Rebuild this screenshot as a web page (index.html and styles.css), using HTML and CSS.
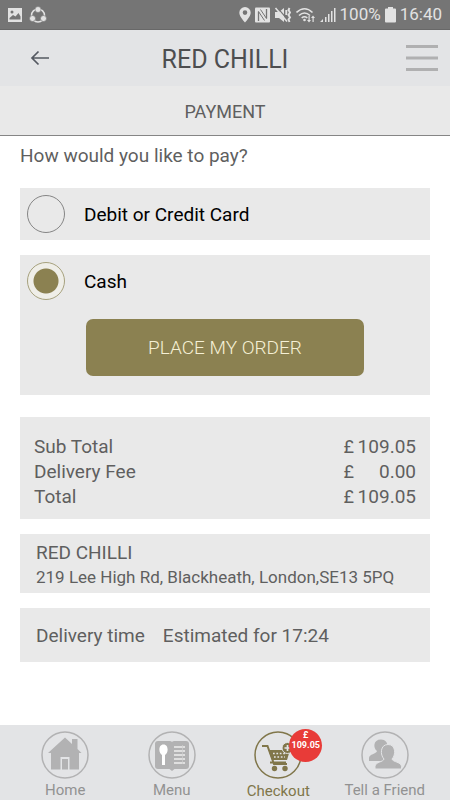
FILE: index.html
```html
<!DOCTYPE html>
<html lang="en">
<head>
<meta charset="utf-8">
<meta name="viewport" content="width=device-width, initial-scale=1">
<title>Red Chilli - Payment</title>
<link rel="stylesheet" href="styles.css">
</head>
<body>
<div class="status">
  <div class="status-group status-left">
    <svg width="16" height="16" viewBox="0 0 16 16"><path fill="currentColor" fill-rule="evenodd" d="M1 1h14v14H1zM2.500 12.500h11V9.500L11.500 6 8.500 9.500 6 8l-3.500 3z"/><circle cx="5" cy="5" r="1.500" fill="#757575"/></svg>
    <svg width="18" height="18" viewBox="0 0 18 18"><circle cx="9" cy="9.500" r="6.500" fill="none" stroke="currentColor" stroke-width="1.500"/><g fill="currentColor" stroke="#757575" stroke-width=".6"><circle cx="9" cy="3.500" r="3"/><circle cx="3.500" cy="12.500" r="3"/><circle cx="14.500" cy="12.500" r="3"/></g></svg>
  </div>
  <div class="status-group status-right">
    <svg width="12" height="16" viewBox="0 0 12 16"><path fill="currentColor" fill-rule="evenodd" d="M6 0a5.700 5.700 0 0 1 5.700 5.700C11.700 9.500 6 15.500 6 15.500S.3 9.500.3 5.700A5.700 5.700 0 0 1 6 0zm0 3.300a2.300 2.300 0 1 0 0 4.600 2.300 2.300 0 0 0 0-4.600z"/></svg>
    <svg width="15" height="16" viewBox="0 0 15 16"><rect y=".5" width="15" height="15" rx="1" fill="currentColor"/><path d="M3.500 14V4.500M11.500 2v9.500" fill="none" stroke="#757575" stroke-width="1.300"/><path d="M5.500 2.500l6 9M3.500 4.500l6 9" stroke="#757575"/></svg>
    <svg width="18" height="16" viewBox="0 0 18 16"><path fill="currentColor" d="M1 5h4l5-4v14l-5-4H1z"/><path d="M3.500.8L13.500 12.500" stroke="#757575" stroke-width="1.200"/><path d="M1.500 1L13 14.500" stroke="currentColor" stroke-width="1.600"/><path d="M12.300 3v5M15.500 1l-1 2 1.500 2.500L14.500 8l1.500 2.500-1.500 2 1 2.500" fill="none" stroke="currentColor" stroke-width="1.900"/></svg>
    <svg width="20" height="16" viewBox="0 0 20 16"><g fill="none" stroke="currentColor" stroke-width="1.600"><path d="M.5 5.500Q8.500-2 16.500 5.500M3 8.500q5.500-5 11 0M5.700 11q2.800-2.500 5.600 0"/></g><circle cx="8.500" cy="13" r="1.300" fill="currentColor"/><path fill="currentColor" d="M12.500 9h1.200v4H15l-2 2.500-2-2.500h1.500zM16.500 15h1.200v-4H19l-2-2.500-2 2.500h1.500z"/></svg>
    <svg width="16" height="16" viewBox="0 0 16 16"><path fill="currentColor" d="M0 15l3-3v3zM5 10h1.500v5H5zM8 7h1.500v8H8zM11 4h1.500v11H11zM14 1h1.500v14H14z"/></svg>
    <span>100%</span>
    <svg width="11" height="16" viewBox="0 0 11 16"><path fill="currentColor" d="M3 0h5v1.500h2q1 0 1 1v12q0 1-1 1H1q-1 0-1-1v-12q0-1 1-1h2z"/></svg>
    <span>16:40</span>
  </div>
</div>
<header class="topbar">
  <button class="icon-button" aria-label="Back"><svg width="20" height="16" viewBox="0 0 20 16"><path d="M19 8H2M8.500 1.500L2 8l6.500 6.500" fill="none" stroke="#555962" stroke-width="1.700"/></svg></button>
  <h1>RED CHILLI</h1>
  <button class="icon-button" aria-label="Open menu"><svg width="32" height="28" viewBox="0 0 32 28"><path d="M0 2.500h32M0 14h32M0 25.500h32" stroke="#b0b0b1" stroke-width="3"/></svg></button>
</header>
<h2 class="subbar">PAYMENT</h2>
<main class="content">
  <form class="pay">
    <fieldset>
      <legend>How would you like to pay?</legend>
      <div class="card">
        <label class="option"><input type="radio" name="method" value="card"><span>Debit or Credit Card</span></label>
      </div>
      <div class="card">
        <label class="option"><input type="radio" name="method" value="cash" checked><span>Cash</span></label>
        <button class="order" type="button">PLACE MY ORDER</button>
      </div>
    </fieldset>
  </form>
  <section class="card totals">
    <table>
      <tr><th scope="row">Sub Total</th><td class="currency">£</td><td>109.05</td></tr>
      <tr><th scope="row">Delivery Fee</th><td class="currency">£</td><td>0.00</td></tr>
      <tr><th scope="row">Total</th><td class="currency">£</td><td>109.05</td></tr>
    </table>
  </section>
  <section class="card address">
    <h3>RED CHILLI</h3>
    <p>219 Lee High Rd, Blackheath, London,SE13 5PQ</p>
  </section>
  <section class="card delivery"><span>Delivery time</span><span>Estimated for 17:24</span></section>
</main>
<nav class="tabs">
  <a href="#home">
    <svg width="48" height="48" viewBox="0 0 48 48"><circle cx="24" cy="24" r="23" fill="none" stroke="currentColor" stroke-width="1.500"/><path fill="currentColor" d="M24 6.500L31 13V8h5.500v10l4 4H38v16.500H28.500V26h-9v12.500H10V22H7zM21 28h6v10.500h-6z"/></svg>
    <span>Home</span>
  </a>
  <a href="#menu">
    <svg width="48" height="48" viewBox="0 0 48 48"><circle cx="24" cy="24" r="23" fill="none" stroke="currentColor" stroke-width="1.500"/><path fill="currentColor" d="M10 10h11.500q2 0 2.500 1 .5-1 2.500-1H38q3 0 3 3v22q0 3-3 3H26.500l-2.500 2-2.500-2H10q-3 0-3-3V13q0-3 3-3z"/><path fill="#fff" d="M15.500 13.500c5.500 0 5 9 1.500 10.500V34h-3V24c-3.500-1.500-4-10.500 1.500-10.500z"/><path d="M26 16h11M26 20h11M26 24h11M26 28h11M26 32h11" stroke="#eee" stroke-width="1.400"/><path d="M34.500 14v19" stroke="#cfcfcf" stroke-width=".7"/></svg>
    <span>Menu</span>
  </a>
  <a class="active" href="#checkout" aria-current="page">
    <span class="icon-wrap">
      <svg width="48" height="48" viewBox="0 0 48 48"><circle cx="24" cy="24" r="23" fill="none" stroke="currentColor" stroke-width="1.500"/><path d="M8 15h5.500l6.500 18h13M16 31.500h16" fill="none" stroke="currentColor" stroke-width="2"/><path fill="currentColor" d="M14.500 19H36l-3 10H18z"/><path d="M19 22.500h13M20 26h11" stroke="#e3e4e6" stroke-width="1.700" stroke-dasharray="1.700 1.700"/><circle cx="20.500" cy="37.500" r="2.700" fill="currentColor"/><circle cx="31" cy="37.500" r="2.700" fill="currentColor"/><circle cx="33.500" cy="17" r="5.500" fill="currentColor" stroke="#e3e4e6"/><path d="M30.500 17h6M33.500 14v6" stroke="#e3e4e6" stroke-width="1.700"/></svg>
      <span class="badge"><span>£</span><span>109.05</span></span>
    </span>
    <span>Checkout</span>
  </a>
  <a href="#friend">
    <svg width="48" height="48" viewBox="0 0 48 48"><circle cx="24" cy="24" r="23" fill="none" stroke="currentColor" stroke-width="1.500"/><g fill="currentColor"><path d="M20 8.500c4.500 0 6.500 3 6.500 7 0 4-2 5.500-2.500 8.500l2 6H8v-3c0-4 7.500-4 8-7-4-3-4-11.500 4-11.500z"/><path stroke="#e3e4e6" d="M27 13.500c8 0 8 10.500 4 14.500.5 3 9.500 3 9.500 7.500v2.500H14v-2.500c0-4.500 8.500-4.500 9-7.500-4-4-4-14.500 4-14.500z"/></g></svg>
    <span>Tell a Friend</span>
  </a>
</nav>
</body>
</html>
```
FILE: styles.css
```css
* { box-sizing: border-box; }
body {
  margin: 0;
  min-height: 100vh;
  display: flex;
  flex-direction: column;
  background: #fff;
  color: #5f5f5f;
  font: 19px/25px Roboto, "Liberation Sans", sans-serif;
}
h1, h2, h3, p { margin: 0; font-weight: 400; }
button { font: inherit; cursor: pointer; }
svg { display: block; flex: none; }

.status {
  height: 30px;
  padding: 0 8px 0 7px;
  display: flex;
  align-items: center;
  justify-content: space-between;
  background: #757575;
  color: #e2e2e2;
  border-bottom: 1px solid #686868;
  font-size: 17px;
}
.status-group { display: flex; align-items: center; }
.status-left { gap: 6px; }
.status-right { gap: 4px; }

.topbar {
  height: 56px;
  padding: 2px 12px 0;
  display: grid;
  grid-template-columns: 56px 1fr 56px;
  align-items: center;
  background: #e3e4e6;
}
.topbar h1 {
  padding-top: 1px;
  text-align: center;
  color: #4d4e50;
  font-size: 25px;
  line-height: 32px;
}
.icon-button {
  height: 40px;
  padding: 0 0 2px;
  border: 0;
  background: none;
  display: flex;
  align-items: center;
  justify-content: center;
}
.icon-button:last-child { justify-content: flex-end; }

.subbar {
  height: 50px;
  padding-top: 2px;
  display: flex;
  align-items: center;
  justify-content: center;
  background: #e9e9e9;
  border-bottom: 1px solid #858585;
  font-size: 18px;
}

.content {
  padding: 7px 20px 24px;
  display: flex;
  flex-direction: column;
  gap: 15px;
}
.pay { margin-bottom: 7px; }
fieldset {
  margin: 0;
  padding: 0;
  border: 0;
  min-width: 0;
}
legend { padding: 0; margin-bottom: 20px; }
.card { background: #e9e9e9; }
.card + .card { margin-top: 15px; }
.content > .card { margin-top: 0; }
.option {
  height: 52px;
  padding: 0 7px;
  display: flex;
  align-items: center;
  gap: 19px;
  color: #000;
}
.option input {
  appearance: none;
  width: 38px;
  height: 38px;
  margin: 0;
  border: 1px solid #858585;
  border-radius: 50%;
}
.option input:checked {
  border-color: #a6a17d;
  background: radial-gradient(circle, #8b8151 12px, #efeee8 13px);
}
.order {
  display: block;
  width: 68%;
  height: 57px;
  margin: 12px auto 0;
  border: 0;
  border-radius: 7px;
  background: #8b8151;
  color: #f5f0d5;
  font-weight: 300;
}
.card:has(.order) { padding-bottom: 19px; }

.totals { padding: 17px 14px 10px; }
table { width: 100%; border-collapse: collapse; }
th, td { padding: 0; text-align: right; font-weight: 400; }
th { text-align: left; }
td { width: 62px; }
.currency { width: 16px; font-size: 18px; }

.address { padding: 6px 16px 3px; }
.address h3 { font-size: 19px; }
.address p { font-size: 17px; }
.delivery {
  height: 54px;
  padding: 0 16px;
  display: flex;
  align-items: center;
  gap: 18px;
}

.tabs {
  margin-top: auto;
  min-height: 75px;
  padding: 6px 12px 0;
  display: grid;
  grid-template-columns: repeat(4, 1fr);
  background: #e3e4e6;
  font-size: 15px;
  line-height: 17px;
}
.tabs a {
  display: flex;
  flex-direction: column;
  align-items: center;
  gap: 3px;
  color: #929292;
  text-decoration: none;
}
.tabs a > svg { color: #b2b2b3; }
.tabs .active {
  gap: 4px;
  color: #80764a;
}
.icon-wrap { position: relative; }
.badge {
  position: absolute;
  top: -2px;
  left: 35px;
  width: 33px;
  height: 33px;
  padding-top: 1px;
  display: flex;
  flex-direction: column;
  align-items: center;
  border-radius: 50%;
  background: #e83b38;
  color: #fff;
  font-size: 9px;
  font-weight: 700;
  line-height: 10px;
}
```
